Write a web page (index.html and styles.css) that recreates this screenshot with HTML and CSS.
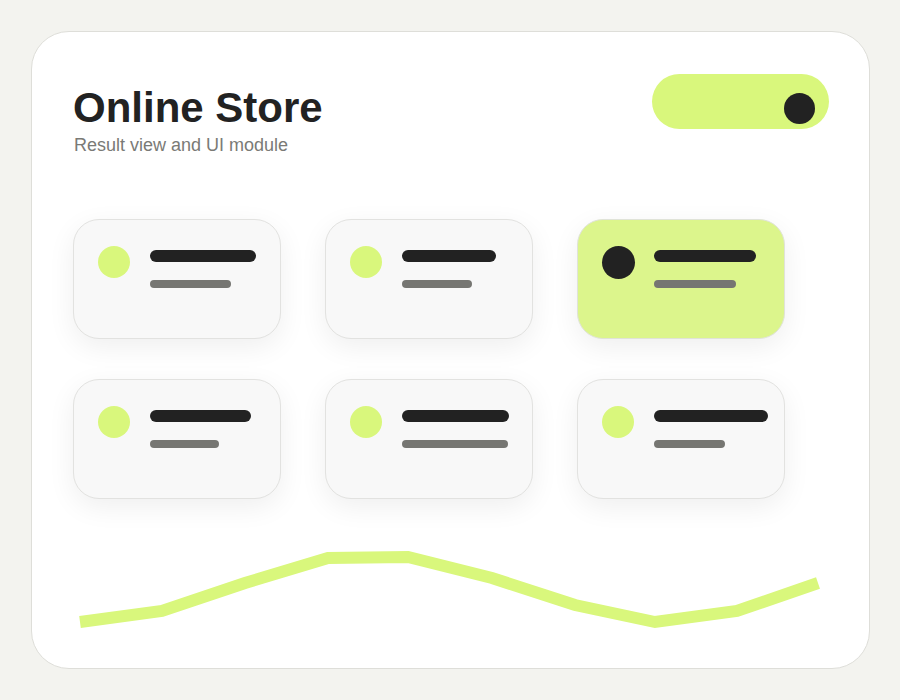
FILE: index.html
```html
<!DOCTYPE html>
<html lang="en">
<head>
    <meta charset="UTF-8">
    <meta name="viewport" content="width=device-width, initial-scale=1.0">
    <title>Online Store</title>
    <link rel="stylesheet" href="styles.css">
</head>
<body>
    <div id="panel">
        <div class="header">
            <div class="heading">
                <h1 id="store-title">Online Store</h1>
                <p id="store-subtitle">Result view and UI module</p>
            </div>
            <div class="toggle">
                <div class="toggle-knob"></div>
            </div>
        </div>

        <div class="tiles">
            <div class="tile">
                <div class="tile-dot"></div>
                <div class="tile-lines">
                    <div class="line-dark" style="width: 106px;"></div>
                    <div class="line-gray" style="width: 81px;"></div>
                </div>
            </div>
            <div class="tile">
                <div class="tile-dot"></div>
                <div class="tile-lines">
                    <div class="line-dark" style="width: 94px;"></div>
                    <div class="line-gray" style="width: 70px;"></div>
                </div>
            </div>
            <div class="tile active">
                <div class="tile-dot"></div>
                <div class="tile-lines">
                    <div class="line-dark" style="width: 102px;"></div>
                    <div class="line-gray" style="width: 82px;"></div>
                </div>
            </div>
            <div class="tile">
                <div class="tile-dot"></div>
                <div class="tile-lines">
                    <div class="line-dark" style="width: 101px;"></div>
                    <div class="line-gray" style="width: 69px;"></div>
                </div>
            </div>
            <div class="tile">
                <div class="tile-dot"></div>
                <div class="tile-lines">
                    <div class="line-dark" style="width: 107px;"></div>
                    <div class="line-gray" style="width: 106px;"></div>
                </div>
            </div>
            <div class="tile">
                <div class="tile-dot"></div>
                <div class="tile-lines">
                    <div class="line-dark" style="width: 114px;"></div>
                    <div class="line-gray" style="width: 71px;"></div>
                </div>
            </div>
        </div>

        <!-- Trend line under the tiles -->
        <svg class="trend" width="756" height="100" viewBox="0 0 756 100">
            <polyline points="7,82 89,71 172,43 255,18 335,17 419,38 502,65 582,82 664,71 745,43"
                      fill="none" stroke="#d9f77c" stroke-width="12" />
        </svg>
    </div>
</body>
</html>
```

FILE: styles.css
```css
body {
    font-family: "Liberation Sans", Arial, sans-serif;
    background-color: #f3f3ef;
    margin: 0;
    padding: 31px;
}

#panel {
    box-sizing: border-box;
    width: 839px;
    height: 638px;
    background-color: #ffffff;
    border: 1.5px solid #deded9;
    border-radius: 38px;
    padding: 42px 40px 0 41px;
}

.header {
    display: flex;
    justify-content: space-between;
    align-items: flex-start;
    height: 80px;
}

#store-title {
    font-size: 42px;
    line-height: 48px;
    font-weight: bold;
    color: #222222;
    margin: 10px 0 0 0;
}

#store-subtitle {
    font-size: 18px;
    line-height: 22px;
    color: #7a7a76;
    margin: 2px 0 0 1px;
}

.toggle {
    position: relative;
    width: 177px;
    height: 55px;
    border-radius: 28px;
    background-color: #d9f77c;
}

/* knob sits a little low in the pill */
.toggle-knob {
    position: absolute;
    right: 14px;
    top: 19px;
    width: 31px;
    height: 31px;
    border-radius: 50%;
    background-color: #222222;
}

.tiles {
    display: grid;
    grid-template-columns: repeat(3, 208px);
    grid-auto-rows: 120px;
    column-gap: 44px;
    row-gap: 40px;
    margin-top: 65px;
}

.tile {
    box-sizing: border-box;
    display: flex;
    align-items: flex-start;
    gap: 20px;
    padding: 26px 24px;
    background-color: #f8f8f8;
    border: 1.5px solid #e2e2e0;
    border-radius: 26px;
    box-shadow: 0 8px 28px rgba(0, 0, 0, 0.065);
}

.tile-dot {
    flex: none;
    width: 32px;
    height: 32px;
    border-radius: 50%;
    background-color: #d9f77c;
}

.tile-lines {
    display: flex;
    flex-direction: column;
    gap: 18px;
    padding-top: 4px;
}

.line-dark {
    height: 12px;
    border-radius: 6px;
    background-color: #222222;
}

.line-gray {
    height: 8px;
    border-radius: 4px;
    background-color: #767672;
}

.tile.active {
    gap: 19px;
    background-color: #dcf58c;
    border-color: #e0e3d8;
}

.tile.active .tile-dot {
    width: 33px;
    height: 33px;
    background-color: #222222;
}

.trend {
    display: block;
    margin-top: 41px;
}
```
